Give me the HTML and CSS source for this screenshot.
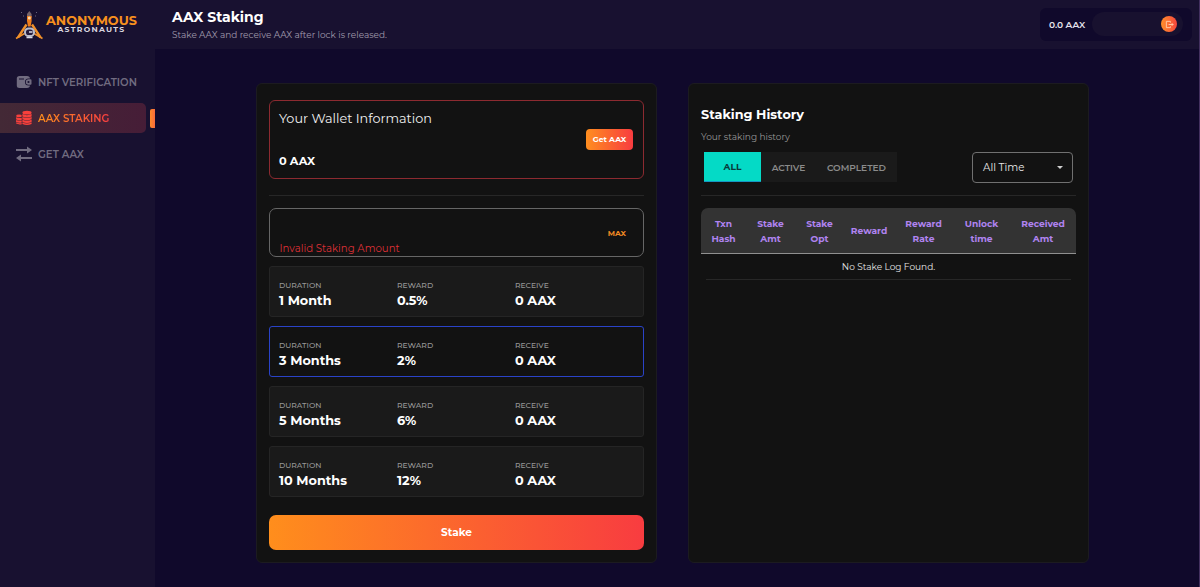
FILE: index.html
```html
<!DOCTYPE html>
<html lang="en">
<head>
    <meta charset="UTF-8">
    <meta name="viewport" content="width=device-width, initial-scale=1.0">
    <title>AAX Staking</title>
    <link rel="stylesheet" href="styles.css">
</head>
<body>

<aside class="sidebar">
    <div class="logo">
        <svg class="logo-mark" viewBox="0 0 28 30" width="28" height="30">
            <path d="M11.5 14.500 L3 27.500 M17 14.500 L25.500 27.500" stroke="#f0902a" stroke-width="2.400" fill="none"/>
            <path d="M1 28.500 L9.500 23.500 M27.500 28.500 L19 23.500" stroke="#f0902a" stroke-width="1.600" fill="none"/>
            <path d="M12 4 L14.300 1 L16.600 4 V8 H12 Z" fill="#77656a"/>
            <path d="M12 6 H16.600 V11 L15.600 16.500 H13 L12 11 Z" fill="#ee7d1d"/>
            <circle cx="14.300" cy="8" r="1.500" fill="#ffd9a8"/>
            <rect x="10" y="18.500" width="9" height="7.500" rx="3.600" fill="#241b3c" stroke="#b9bccb" stroke-width="2"/>
            <path d="M14 22 H17.500 M11.500 27.500 H17.500" stroke="#d8dae6" stroke-width="1.500"/>
            <path d="M6 2.500 h1 M21 2.500 h1 M8 6 h1 M20 6 h1" stroke="#6c657c"/>
        </svg>
        <div class="logo-text">
            <span class="logo-top">ANONYMOUS</span>
            <span class="logo-bottom">ASTRONAUTS</span>
        </div>
    </div>

    <nav class="menu">
        <a class="menu-item">
            <svg class="menu-icon" viewBox="0 0 16 14" width="16" height="14">
                <path d="M3.500 1 H11 Q13.800 1 14 3.500 H12.500 A3.500 3.500 0 0 0 12.500 10.600 H14 Q13.800 13 11 13 H3.500 Q.8 13 .8 10.500 V3.500 Q.8 1 3.500 1 Z" fill="currentColor"/>
                <path d="M3 4 H8" stroke="#181130"/>
                <path d="M12.500 4.300 H14.500 Q15.500 4.300 15.500 5.300 V8.700 Q15.500 9.700 14.500 9.700 H12.500 A2.700 2.700 0 0 1 12.500 4.300 Z" fill="currentColor"/>
                <circle cx="12.500" cy="7" r="1.100" fill="#181130"/>
            </svg>
            <span class="menu-label nft">NFT VERIFICATION</span>
        </a>
        <a class="menu-item active">
            <svg class="menu-icon" viewBox="0 0 16 15" width="17" height="16">
                <g fill="#f8403c">
                    <ellipse cx="11" cy="2.200" rx="4.600" ry="1.900"/>
                    <path d="M6.400 3.600 q4.600 2.200 9.200 0 v2.300 q-4.600 2.200 -9.200 0z M6.400 6.400 q4.600 2.200 9.200 0 v2.300 q-4.600 2.200 -9.200 0z M6.400 9.200 q4.600 2.200 9.200 0 v2.300 q-4.600 2.200 -9.200 0z M6.400 12 q4.600 2.200 9.200 0 v1.500 q-4.600 2 -9.200 0z"/>
                    <ellipse cx="3" cy="5.400" rx="2.900" ry="1.400"/>
                    <path d="M.1 6.700 q2.700 1.300 5.600 .5 v2.200 q-2.700 .8 -5.600 -.5z M.1 9.400 q2.700 1.300 5.600 .5 v2 q-2.700 .8 -5.600 -.5z M.1 12 q2.700 1.300 5.600 .5 v1.200 q-3 .6 -5.600 -.6z"/>
                </g>
            </svg>
            <span class="menu-label staking">AAX STAKING</span>
        </a>
        <a class="menu-item">
            <svg class="menu-icon" viewBox="0 0 16 16" width="16" height="16">
                <path d="M0 4 H12 M16 12 H4" stroke="currentColor" stroke-width="2"/>
                <path d="M11 .5 L16 4 L11 7.500 Z M5 8.500 L0 12 L5 15.500 Z" fill="currentColor"/>
            </svg>
            <span class="menu-label get">GET AAX</span>
        </a>
    </nav>
</aside>

<div class="page">
    <header class="topbar">
        <div>
            <h1>AAX Staking</h1>
            <p class="subtitle">Stake AAX and receive AAX after lock is released.</p>
        </div>
        <div class="account">
            <span class="balance">0.0 AAX</span>
            <div class="address">
                <button class="logout" aria-label="Log out">
                    <svg viewBox="0 0 10 10" width="9" height="9" fill="none" stroke="#ffd0b0" stroke-width="1">
                        <path d="M6 3 V1.500 H1.500 V8.500 H6 V7 M4 5 H9 M7.500 3.500 L9 5 L7.500 6.500"/>
                    </svg>
                </button>
            </div>
        </div>
    </header>

    <main class="content">
        <section class="card">
            <div class="wallet">
                <div class="wallet-info">
                    <h2>Your Wallet Information</h2>
                    <strong class="wallet-balance">0 AAX</strong>
                </div>
                <button class="get-button">Get AAX</button>
            </div>
            <hr>
            <div class="amount">
                <span class="error">Invalid Staking Amount</span>
                <button class="max">MAX</button>
            </div>
            <div class="options">
                <div class="option">
                    <div><small>DURATION</small><b>1 Month</b></div>
                    <div><small>REWARD</small><b>0.5%</b></div>
                    <div><small>RECEIVE</small><b>0 AAX</b></div>
                </div>
                <div class="option selected">
                    <div><small>DURATION</small><b>3 Months</b></div>
                    <div><small>REWARD</small><b>2%</b></div>
                    <div><small>RECEIVE</small><b>0 AAX</b></div>
                </div>
                <div class="option">
                    <div><small>DURATION</small><b>5 Months</b></div>
                    <div><small>REWARD</small><b>6%</b></div>
                    <div><small>RECEIVE</small><b>0 AAX</b></div>
                </div>
                <div class="option">
                    <div><small>DURATION</small><b>10 Months</b></div>
                    <div><small>REWARD</small><b>12%</b></div>
                    <div><small>RECEIVE</small><b>0 AAX</b></div>
                </div>
            </div>
            <button class="stake-button">Stake</button>
        </section>

        <section class="card history">
            <h3>Staking History</h3>
            <p class="history-note">Your staking history</p>
            <div class="filters">
                <div class="tabs">
                    <button class="tab current">ALL</button>
                    <button class="tab">ACTIVE</button>
                    <button class="tab completed">COMPLETED</button>
                </div>
                <div class="select">
                    <span>All Time</span>
                    <svg viewBox="0 0 6 3" width="6" height="3"><path d="M0 0 H6 L3 3 Z" fill="#d0d0d0"/></svg>
                </div>
            </div>
            <hr>
            <div class="log">
                <div class="log-head">
                    <span>Txn<br>Hash</span>
                    <span>Stake<br>Amt</span>
                    <span>Stake<br>Opt</span>
                    <span>Reward</span>
                    <span>Reward<br>Rate</span>
                    <span>Unlock<br>time</span>
                    <span>Received<br>Amt</span>
                </div>
                <div class="log-empty">No Stake Log Found.</div>
            </div>
        </section>
    </main>
</div>

</body>
</html>
```
FILE: styles.css
```css
* {
    box-sizing: border-box;
}
body {
    margin: 0;
    height: 587px;
    display: flex;
    overflow: hidden;
    font-family: Montserrat, Inter, sans-serif;
    background: #10092b;
    color: #fff;
    border-right: 1px solid #43305f;
}
h1, h2, h3, p {
    margin: 0;
}
button {
    font-family: inherit;
    color: #fff;
    border: none;
    padding: 0;
    cursor: pointer;
}
hr {
    width: 100%;
    height: 1px;
    margin: 0;
    border: none;
    background: #272727;
}

/* Sidebar */
.sidebar {
    width: 155px;
    flex-shrink: 0;
    background: #181130;
}
.logo {
    display: flex;
    gap: 3px;
    height: 49px;
    padding: 10px 0 0 15px;
}
.logo-text {
    display: flex;
    flex-direction: column;
    align-items: center;
    padding-top: 5px;
}
.logo-top {
    font-size: 12.8px;
    line-height: 11px;
    font-weight: 700;
    color: #f7901e;
}
.logo-bottom {
    font-size: 7.7px;
    line-height: 8px;
    font-weight: 700;
    letter-spacing: 1.3px;
    color: #d8d5df;
}
.menu {
    display: flex;
    flex-direction: column;
    gap: 6px;
    padding-top: 18px;
}
.menu-item {
    display: flex;
    align-items: center;
    gap: 6px;
    width: 155px;
    height: 30px;
    padding-left: 16px;
    color: #716c80;
    font-size: 10.2px;
    font-weight: 600;
}
.menu-icon {
    width: 16px;
    flex-shrink: 0;
}
.menu-item.active {
    position: relative;
    width: 146px;
    border-radius: 0 5px 5px 0;
    background: linear-gradient(90deg, #432936, #461d37);
}
.menu-item.active::after {
    content: "";
    position: absolute;
    left: 150px;
    top: 6px;
    width: 5px;
    height: 19px;
    border-radius: 2px 0 0 2px;
    background: linear-gradient(90deg, #ff8a2a, #f86a3c);
}
.menu-label.staking {
    background: linear-gradient(90deg, #ff901c, #f83e40);
    background-clip: text;
    -webkit-background-clip: text;
    color: transparent;
}

/* Header */
.page {
    flex: 1;
}
.topbar {
    display: flex;
    justify-content: space-between;
    height: 49px;
    padding: 8px 7px 0 17px;
    background: #181130;
}
h1 {
    font-size: 14px;
    line-height: 19px;
    font-weight: 700;
}
.subtitle {
    font-size: 8.95px;
    line-height: 15px;
    color: #a09cad;
}
.account {
    display: flex;
    align-items: center;
    gap: 7px;
    width: 152px;
    height: 33px;
    padding: 0 0 1px 9px;
    border-radius: 6px;
    background: #10092b;
}
.balance {
    font-size: 9px;
    font-weight: 600;
    color: #e6e3ec;
}
.address {
    display: flex;
    align-items: center;
    justify-content: flex-end;
    width: 91px;
    height: 24px;
    padding-right: 6px;
    border-radius: 12px;
    background: #18112f;
}
.logout {
    display: flex;
    align-items: center;
    justify-content: center;
    width: 16px;
    height: 16px;
    border-radius: 50%;
    background: linear-gradient(90deg, #ff8f2a, #f8463e);
}

/* Cards */
.content {
    display: flex;
    gap: 31px;
    padding: 34px 0 0 101px;
}
.card {
    width: 401px;
    height: 480px;
    padding: 16px 12px 0;
    border: 1px solid #1c1b20;
    border-radius: 6px;
    background: #121212;
}
.wallet {
    display: flex;
    align-items: center;
    justify-content: space-between;
    height: 79px;
    margin-bottom: 16px;
    padding: 0 10px 0 9px;
    border: 1px solid #8c2a30;
    border-radius: 6px;
}
.wallet-info {
    display: flex;
    flex-direction: column;
    gap: 25px;
}
h2 {
    padding-top: 1px;
    font-size: 12.8px;
    line-height: 18px;
    font-weight: 400;
    color: #f0f0f0;
}
.wallet-balance {
    font-size: 11.3px;
    line-height: 17px;
    font-weight: 700;
}
.get-button {
    width: 47px;
    height: 21px;
    border-radius: 4px;
    background: linear-gradient(90deg, #ff8e1f, #f83c40);
    font-size: 7.7px;
    font-weight: 700;
}
.amount {
    display: flex;
    align-items: center;
    justify-content: space-between;
    height: 49px;
    margin: 12px 0 9px;
    padding: 0 17px 0 9.500px;
    border: 1px solid #666;
    border-radius: 7px;
}
.error {
    align-self: flex-end;
    font-size: 10.2px;
    line-height: 14px;
    color: #dc3036;
}
.max {
    padding-top: 1px;
    background: none;
    font-size: 7.6px;
    font-weight: 700;
    color: #f08a24;
}
.options {
    display: flex;
    flex-direction: column;
    gap: 9px;
}
.option {
    display: grid;
    grid-template-columns: 118px 118px 1fr;
    height: 51px;
    padding: 12px 9px 0;
    border: 1px solid #252525;
    border-radius: 3px;
    background: #1a1a1a;
}
.option.selected {
    border-color: #2a43c8;
    background: #121212;
}
.option small {
    display: block;
    font-size: 7.6px;
    line-height: 13px;
    font-weight: 500;
    color: #969696;
}
.option b {
    display: block;
    font-size: 12.8px;
    line-height: 17px;
    font-weight: 700;
}
.stake-button {
    width: 100%;
    height: 35px;
    margin-top: 18px;
    border-radius: 7px;
    background: linear-gradient(90deg, #ff8e1c, #f83c40);
    font-size: 10.5px;
    font-weight: 700;
}

/* History */
.history {
    padding-top: 21px;
}
h3 {
    font-size: 12.8px;
    line-height: 19px;
    font-weight: 700;
}
.history-note {
    padding-top: 5px;
    font-size: 9px;
    line-height: 15px;
    color: #969696;
}
.filters {
    display: flex;
    justify-content: space-between;
    height: 51px;
    padding: 8px 3px 0;
}
.tabs {
    display: flex;
    height: 30px;
    background: #1a1a1a;
}
.tab {
    width: 55px;
    background: none;
    font-size: 9px;
    font-weight: 600;
    color: #8b8b8b;
}
.tab.current {
    width: 57px;
    border-bottom: 1px solid #1596c4;
    background: #04dac6;
    font-weight: 700;
    color: #083b3c;
}
.tab.completed {
    width: 81px;
}
.select {
    display: flex;
    align-items: center;
    justify-content: space-between;
    width: 101px;
    height: 31px;
    padding: 0 9px 0 10px;
    border: 1px solid #707070;
    border-radius: 4px;
    font-size: 10.3px;
    color: #e8e8e8;
}
.log {
    margin-top: 12px;
}
.log-head {
    display: grid;
    grid-template-columns: 45px 49px 49px 50px 59px 57px 66px;
    align-items: center;
    height: 46px;
    border-bottom: 1px solid #909090;
    border-radius: 7px 7px 0 0;
    background: #333;
    font-size: 9.1px;
    line-height: 15px;
    font-weight: 700;
    text-align: center;
    color: #b083f0;
}
.log-empty {
    height: 26px;
    margin: 0 5px;
    border-bottom: 1px solid #272727;
    font-size: 9px;
    line-height: 25px;
    text-align: center;
    color: #e4e4e4;
}
```
